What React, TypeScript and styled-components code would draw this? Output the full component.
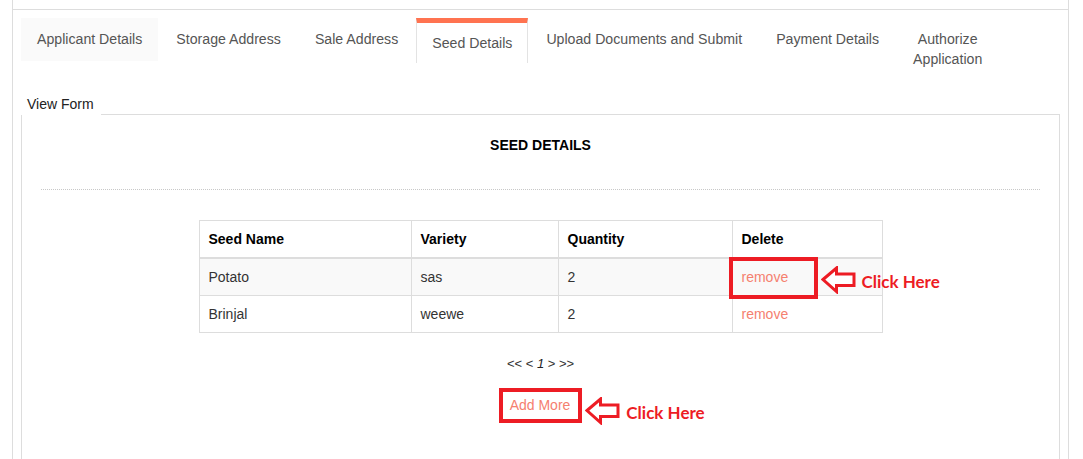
import React from 'react'
import styled, { createGlobalStyle } from 'styled-components'

const GlobalStyle = createGlobalStyle`
  html, body {
    margin: 0;
    padding: 0;
    background: #fff;
  }
  body {
    font-family: 'Liberation Sans', Arial, sans-serif;
    font-size: 14px;
    line-height: 20px;
    color: #333;
  }
`

const RED = '#ed1c24'
const LINK = '#f5806f'

const Frame = styled.div`
  margin-left: 12px;
  width: 1057px;
  min-height: 100vh;
  box-sizing: border-box;
  border-left: 1px solid #ddd;
  border-right: 1px solid #ddd;
  padding-top: 9px;
`

const Content = styled.div`
  border-top: 1px solid #ddd;
  padding: 8px 8px 0 8px;
`

const Tabs = styled.ul`
  display: flex;
  align-items: flex-start;
  list-style: none;
  margin: 0;
  padding: 0;
`

const Tab = styled.li<{ $active?: boolean; $narrow?: boolean }>`
  margin-right: 2px;
  color: #555;
  font-size: 14.15px;
  white-space: ${({ $narrow }) => ($narrow ? 'normal' : 'nowrap')};
  width: ${({ $narrow }) => ($narrow ? 'min-content' : 'auto')};
  text-align: center;
  padding: ${({ $active }) => ($active ? '10px 15px 10px' : '11px 16px 12px')};
  background: ${({ $active }) => ($active ? '#fff' : 'transparent')};
  border-top: ${({ $active }) => ($active ? '5px solid #ff7350' : 'none')};
  border-left: ${({ $active }) => ($active ? '1px solid #e3e3e3' : 'none')};
  border-right: ${({ $active }) => ($active ? '1px solid #e3e3e3' : 'none')};
  &:first-child {
    background: #fafafa;
  }
`

const PanelHead = styled.div`
  display: flex;
  margin-top: 13px;
`

const Legend = styled.div`
  padding: 0 7px 1px 6px;
  color: #222;
`

const Rule = styled.div`
  flex: 1;
  border-bottom: 1px solid #ddd;
`

const PanelBody = styled.div`
  border-left: 1px solid #ddd;
  border-right: 1px solid #ddd;
  padding: 20px 19px 80px;
`

const Title = styled.h4`
  margin: 0;
  text-align: center;
  font-size: 14px;
  font-weight: bold;
  color: #000;
`

const Dotted = styled.hr`
  margin: 34px 0 30px;
  border: none;
  border-top: 1px dotted #c8c8c8;
`

const Table = styled.table`
  margin: 0 auto;
  width: 684px;
  border-collapse: collapse;
  th,
  td {
    border: 1px solid #ddd;
    padding: 8px 9px;
    text-align: left;
    vertical-align: top;
  }
  th {
    color: #000;
    font-weight: bold;
    border-bottom-width: 2px;
  }
  tbody tr:nth-child(odd) {
    background: #f9f9f9;
  }
`

const Link = styled.a`
  color: ${LINK};
  text-decoration: none;
`

const Marked = styled.span`
  position: relative;
  display: inline-block;
`

const Highlight = styled.span`
  position: absolute;
  left: -13px;
  top: -10px;
  width: 89px;
  height: 42px;
  box-sizing: border-box;
  border: 4px solid ${RED};
`

const Pointer = styled.span<{ $left: string; $top: number }>`
  position: absolute;
  left: ${({ $left }) => $left};
  top: ${({ $top }) => $top}px;
  display: flex;
  align-items: center;
  gap: 5px;
  white-space: nowrap;
`

const PointerLabel = styled.span`
  font-family: Lato, 'Open Sans', sans-serif;
  font-weight: 700;
  font-size: 17px;
  color: ${RED};
  margin-top: 3px;
`

const Pager = styled.div`
  margin-top: 21px;
  text-align: center;
  font-size: 13px;
  color: #333;
  i {
    color: #222;
  }
`

const Actions = styled.div`
  display: flex;
  justify-content: center;
  margin-top: 14px;
`

const AddBox = styled.div`
  position: relative;
  border: 4px solid ${RED};
  padding: 3px 8px 4px 7px;
`

const Arrow = () => (
  <svg width="36" height="28" viewBox="0 0 36 28">
    <polygon
      points="2,13.5 15.5,2 15.5,8 33,8 33,19.5 15.5,19.5 15.5,25.5"
      fill="#fff"
      stroke={RED}
      strokeWidth="3"
      strokeLinejoin="miter"
    />
  </svg>
)

const ClickHere = ({ left, top }: { left: string; top: number }) => (
  <Pointer $left={left} $top={top}>
    <Arrow />
    <PointerLabel>Click Here</PointerLabel>
  </Pointer>
)

const tabs = [
  'Applicant Details',
  'Storage Address',
  'Sale Address',
  'Seed Details',
  'Upload Documents and Submit',
  'Payment Details',
  'Authorize Application',
]

const rows = [
  { name: 'Potato', variety: 'sas', qty: 2, marked: true },
  { name: 'Brinjal', variety: 'weewe', qty: 2, marked: false },
]

export default function App() {
  return (
    <>
      <GlobalStyle />
      <Frame>
        <Content>
          <Tabs>
            {tabs.map((t) => (
              <Tab key={t} $active={t === 'Seed Details'} $narrow={t === 'Authorize Application'}>
                {t}
              </Tab>
            ))}
          </Tabs>

          <PanelHead>
            <Legend>View Form</Legend>
            <Rule />
          </PanelHead>
          <PanelBody>
            <Title>SEED DETAILS</Title>
            <Dotted />
            <Table>
              <colgroup>
                <col style={{ width: 212 }} />
                <col style={{ width: 147 }} />
                <col style={{ width: 174 }} />
                <col style={{ width: 150 }} />
              </colgroup>
              <thead>
                <tr>
                  <th>Seed Name</th>
                  <th>Variety</th>
                  <th>Quantity</th>
                  <th>Delete</th>
                </tr>
              </thead>
              <tbody>
                {rows.map((r) => (
                  <tr key={r.name}>
                    <td>{r.name}</td>
                    <td>{r.variety}</td>
                    <td>{r.qty}</td>
                    <td>
                      {r.marked ? (
                        <Marked>
                          <Link href="#">remove</Link>
                          <Highlight />
                          <ClickHere left="79px" top={-1} />
                        </Marked>
                      ) : (
                        <Link href="#">remove</Link>
                      )}
                    </td>
                  </tr>
                ))}
              </tbody>
            </Table>
            <Pager>
              &lt;&lt; &lt; <i>1</i> &gt; &gt;&gt;
            </Pager>
            <Actions>
              <AddBox>
                <Link href="#">Add More</Link>
                <ClickHere left="calc(100% + 7px)" top={5} />
              </AddBox>
            </Actions>
          </PanelBody>
        </Content>
      </Frame>
    </>
  )
}
